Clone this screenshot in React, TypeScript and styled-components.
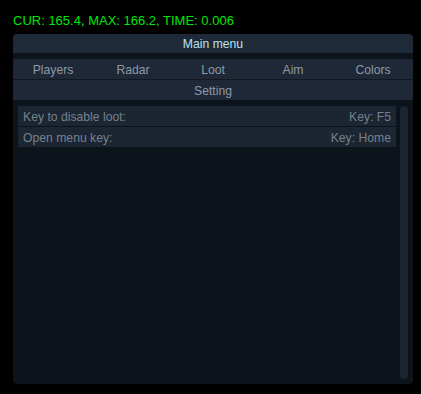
import React from "react";
import styled, { createGlobalStyle } from "styled-components";

const Global = createGlobalStyle`
  html, body { margin: 0; padding: 0; background: #000; }
  body { font-family: "Liberation Sans", Arial, sans-serif; }
`;

const Page = styled.div`
  padding: 13px 8px 10px 13px;
  width: 400px;
`;

const Fps = styled.div`
  color: #00e60a;
  font-size: 13px;
  line-height: 16px;
  height: 16px;
  margin-bottom: 5px;
`;

const Window = styled.div`
  width: 400px;
  height: 350px;
  background: #0d131b;
  border-radius: 4px;
  display: flex;
  flex-direction: column;
  overflow: hidden;
`;

const TitleBar = styled.div`
  height: 19px;
  line-height: 21px;
  background: #1f2a38;
  color: #b8e2ee;
  font-size: 12.2px;
  text-align: center;
  border-radius: 4px 4px 0 0;
`;

const Tabs = styled.div`
  margin-top: 6px;
  display: grid;
  grid-template-columns: repeat(5, 1fr);
  background: #1e2836;
  height: 20px;
  border-bottom: 1px solid #111821;
`;

const Tab = styled.div`
  color: #8d9aa7;
  font-size: 12.2px;
  line-height: 22px;
  text-align: center;
`;

const SubTab = styled.div`
  height: 20px;
  line-height: 22px;
  background: #1e2836;
  color: #8d9aa7;
  font-size: 12.2px;
  text-align: center;
`;

const Body = styled.div`
  flex: 1;
  display: flex;
  gap: 4px;
  padding: 6px 5px 5px 5px;
`;

const List = styled.div`
  flex: 1;
  display: flex;
  flex-direction: column;
  gap: 1px;
`;

const Row = styled.div`
  height: 20px;
  line-height: 22px;
  padding: 0 5px;
  background: #1c2532;
  display: flex;
  justify-content: space-between;
  color: #76828f;
  font-size: 12.2px;
`;

const Scroll = styled.div`
  width: 8px;
  background: #1b2430;
  border-radius: 4px;
`;

const rows = [
  ["Key to disable loot:", "Key: F5"],
  ["Open menu key:", "Key: Home"],
];

export default function App() {
  return (
    <>
      <Global />
      <Page>
        <Fps>CUR: 165.4, MAX: 166.2, TIME: 0.006</Fps>
        <Window>
          <TitleBar>Main menu</TitleBar>
          <Tabs>
            {["Players", "Radar", "Loot", "Aim", "Colors"].map((t) => (
              <Tab key={t}>{t}</Tab>
            ))}
          </Tabs>
          <SubTab>Setting</SubTab>
          <Body>
            <List>
              {rows.map(([l, r]) => (
                <Row key={l}>
                  <span>{l}</span>
                  <span>{r}</span>
                </Row>
              ))}
            </List>
            <Scroll />
          </Body>
        </Window>
      </Page>
    </>
  );
}
